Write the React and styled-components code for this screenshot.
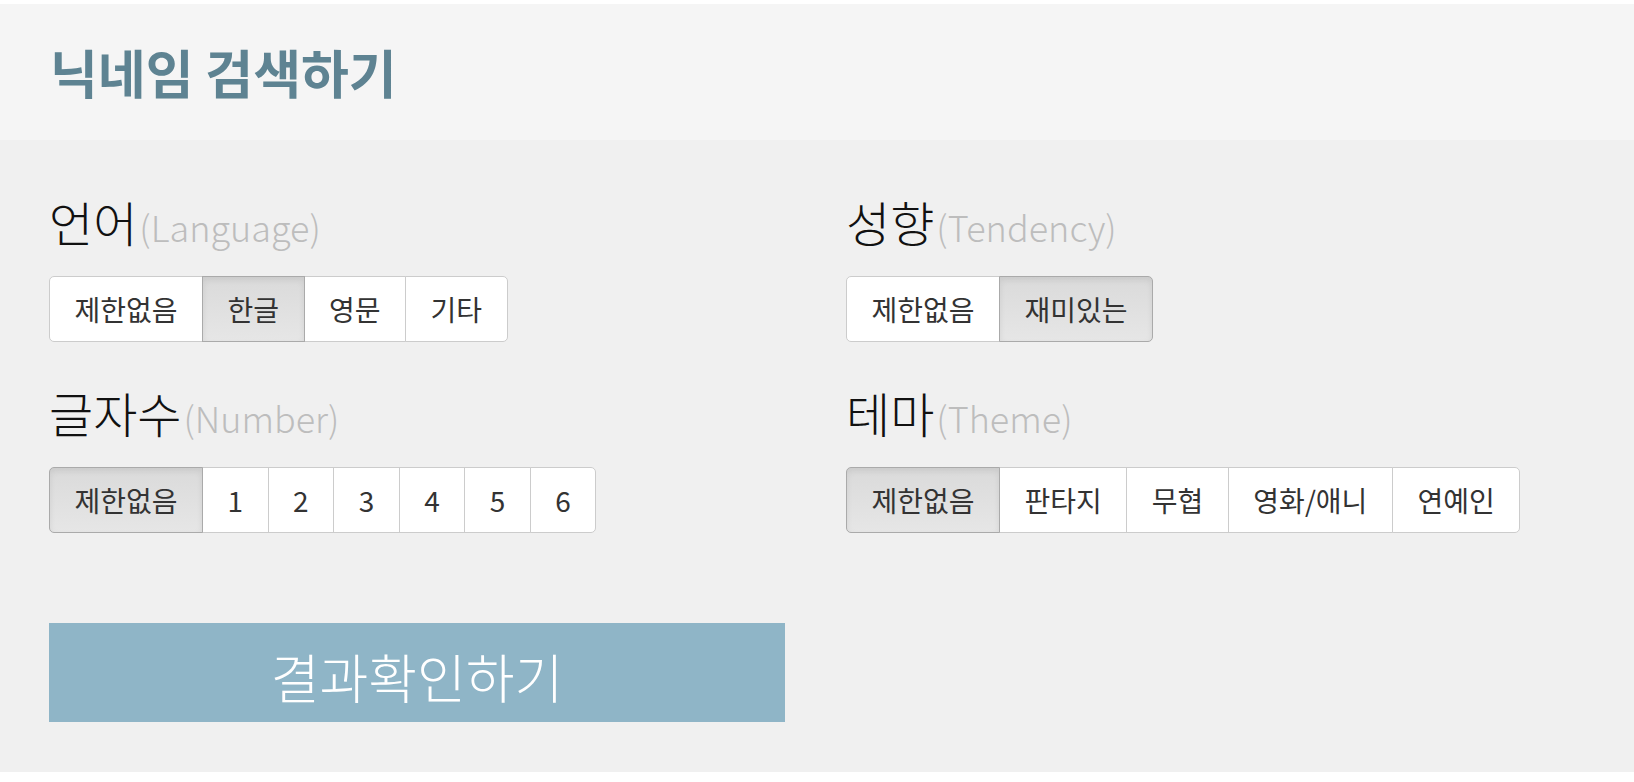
import React, { useState } from "react";
import styled, { createGlobalStyle, css } from "styled-components";

const GlobalStyle = createGlobalStyle`
	html, body {
		margin: 0;
		padding: 0;
		background: #fff;
	}
	body {
		font-family: "Noto Sans CJK KR", "Noto Sans", sans-serif;
		color: #111;
	}
`;

const Page = styled.div`
	padding: 4px 0 10px;
	background: #fff;
`;

const Header = styled.header`
	display: flex;
	align-items: center;
	height: 136px;
	padding-left: 50px;
	background-color: #f5f5f5;
`;

const Title = styled.h1`
	margin: 0;
	font-size: 52px;
	line-height: 1;
	font-weight: 700;
	color: #5e8392;
`;

const Body = styled.div`
	height: 632px;
	box-sizing: border-box;
	padding: 55px 0 0 49px;
	background-color: #f0f0f0;
`;

const Grid = styled.div`
	display: grid;
	grid-template-columns: 797px 1fr;
	row-gap: 44px;
`;

const Section = styled.section`
	display: flex;
	flex-direction: column;
	align-items: flex-start;
	gap: 24px;
`;

const Label = styled.h3`
	margin: 0;
	font-size: 48px;
	line-height: 52px;
	font-weight: 300;
	color: #111;
	span {
		font-size: 36px;
		color: #bdbdbd;
		margin-left: 2px;
	}
`;

const Group = styled.div`
	display: inline-flex;
	padding-left: 1px;
`;

const activeCss = css`
	background: linear-gradient(#dadada, #e6e6e6);
	border-color: #aaa;
	box-shadow: inset 0 3px 6px rgba(0, 0, 0, 0.08);
	z-index: 1;
`;

const Option = styled.button`
	position: relative;
	box-sizing: border-box;
	height: 66px;
	margin-left: -1px;
	padding: 0 24.5px;
	border: 1px solid #ccc;
	background: #fff;
	font-family: inherit;
	font-size: 28px;
	color: #333;
	cursor: pointer;
	&:first-child {
		border-radius: 5px 0 0 5px;
	}
	&:last-child {
		border-radius: 0 5px 5px 0;
	}
	${(p) => p.$active && activeCss}
`;

const Submit = styled.button`
	display: flex;
	align-items: center;
	justify-content: center;
	width: 736px;
	height: 99px;
	margin-top: 90px;
	padding: 6px 0 0;
	border: none;
	background-color: #8fb5c7;
	font-family: inherit;
	font-size: 53px;
	font-weight: 300;
	color: #fff;
	cursor: pointer;
`;

const filters = [
	{ key: "lang", ko: "언어", en: "(Language)", items: ["제한없음", "한글", "영문", "기타"], init: 1 },
	{ key: "tend", ko: "성향", en: "(Tendency)", items: ["제한없음", "재미있는"], init: 1 },
	{ key: "num", ko: "글자수", en: "(Number)", items: ["제한없음", "1", "2", "3", "4", "5", "6"], init: 0 },
	{ key: "theme", ko: "테마", en: "(Theme)", items: ["제한없음", "판타지", "무협", "영화/애니", "연예인"], init: 0 },
];

function Filter({ ko, en, items, value, onChange }) {
	return (
		<Section>
			<Label>
				{ko}
				<span>{en}</span>
			</Label>
			<Group>
				{items.map((item, i) => (
					<Option key={item} $active={i === value} onClick={() => onChange(i)}>
						{item}
					</Option>
				))}
			</Group>
		</Section>
	);
}

export default function App() {
	const [picked, setPicked] = useState(
		Object.fromEntries(filters.map((f) => [f.key, f.init]))
	);

	return (
		<Page>
			<GlobalStyle />
			<Header>
				<Title>닉네임 검색하기</Title>
			</Header>
			<Body>
				<Grid>
					{filters.map((f) => (
						<Filter
							key={f.key}
							{...f}
							value={picked[f.key]}
							onChange={(i) => setPicked({ ...picked, [f.key]: i })}
						/>
					))}
				</Grid>
				<Submit>결과확인하기</Submit>
			</Body>
		</Page>
	);
}
